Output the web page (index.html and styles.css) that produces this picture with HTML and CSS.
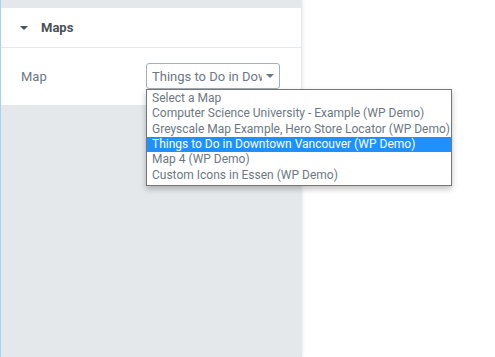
FILE: index.html
```html
<!DOCTYPE html>
<html lang="en">
<head>
  <meta charset="UTF-8" />
  <title>Maps widget</title>
  <link rel="stylesheet" href="styles.css">
</head>
<body>

  <div class="panel">
    <div class="section">
      <div class="section-head">
        <span class="caret"></span>
        <span class="section-title">Maps</span>
      </div>
      <div class="section-body">
        <div class="control">
          <label class="control-label">Map</label>
          <div class="select-wrap">
            <div class="select">
              <span class="select-text">Things to Do in Downtown Vancouver (WP Demo)</span>
              <span class="select-arrow"></span>
            </div>
            <!-- open option list -->
            <ul class="options">
              <li>Select a Map</li>
              <li>Computer Science University - Example (WP Demo)</li>
              <li>Greyscale Map Example, Hero Store Locator (WP Demo)</li>
              <li class="selected">Things to Do in Downtown Vancouver (WP Demo)</li>
              <li>Map 4 (WP Demo)</li>
              <li>Custom Icons in Essen (WP Demo)</li>
            </ul>
          </div>
        </div>
      </div>
    </div>
  </div>

</body>
</html>
```

FILE: styles.css
```css
body {
  margin: 0;
  font-family: Roboto, 'Liberation Sans', sans-serif;
  font-size: 13px;
  background: white;
  height: 357px;
  overflow: hidden;
}

.panel {
  width: 302px;
  height: 100vh;
  background: #e4e8eb;
  border-left: 1px solid #a3d2ff;
  padding-top: 8px;
  box-sizing: border-box;
  box-shadow: 1px 0 3px rgba(0, 0, 0, 0.08);
}

.section {
  background: white;
  margin-right: 1px;
}

.section-head {
  display: flex;
  align-items: center;
  height: 39px;
  padding-left: 19px;
  border-bottom: 1px solid #e6e9ec;
}

.caret {
  width: 0;
  height: 0;
  border-left: 4px solid transparent;
  border-right: 4px solid transparent;
  border-top: 4px solid #495157;
  margin-right: 13px;
}

.section-title {
  font-weight: bold;
  color: #495157;
  font-size: 13px;
}

.section-body {
  padding: 15px 20px 16px 20px;
}

.control {
  display: flex;
  align-items: center;
}

.control-label {
  width: 125px;
  color: #6d7882;
}

.select-wrap {
  position: relative;
}

.select {
  width: 134px;
  height: 26px;
  box-sizing: border-box;
  border: 1px solid #a4afb7;
  border-radius: 3px;
  display: flex;
  align-items: center;
  padding-left: 5px;
}

.select-text {
  width: 110px;
  overflow: hidden;
  white-space: nowrap;
  color: #6d7882;
}

.select-arrow {
  width: 0;
  height: 0;
  margin-left: 4px;
  border-left: 4px solid transparent;
  border-right: 4px solid transparent;
  border-top: 4px solid #6d7882;
}

.options {
  position: absolute;
  top: 26px;
  left: 0;
  width: 306px;
  margin: 0;
  padding: 1px 0 2px 0;
  list-style: none;
  background: white;
  border: 1px solid #767676;
  box-sizing: border-box;
  box-shadow: 0 3px 6px rgba(0, 0, 0, 0.25);
  font-size: 12px;
}

.options li {
  height: 15.33px;
  line-height: 15.33px;
  padding-left: 5px;
  color: #6d7882;
  white-space: nowrap;
}

.options li.selected {
  background: #1e90ff;
  color: white;
}
```
